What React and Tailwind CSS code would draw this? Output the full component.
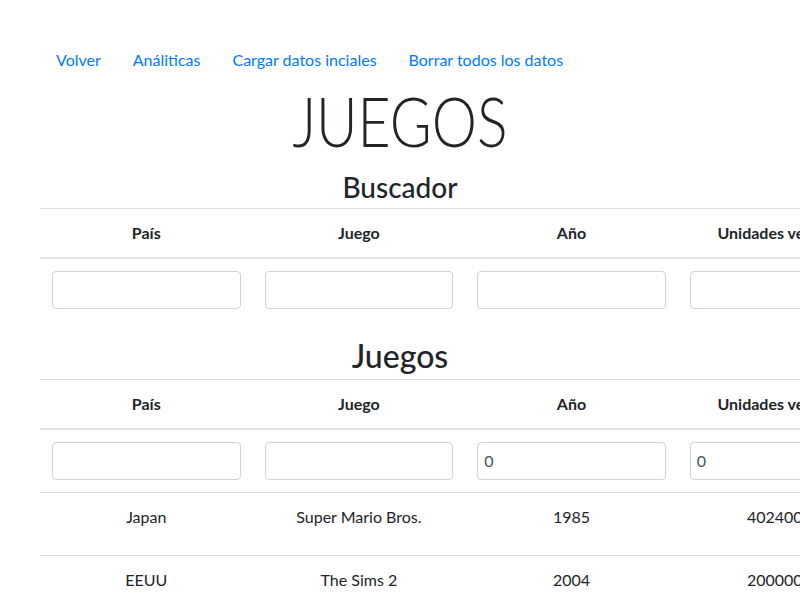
import React from 'react';

const columns = ['País', 'Juego', 'Año', 'Unidades vendidas', 'Acciones'];

const games = [
  { country: 'Japan', name: 'Super Mario Bros.', year: 1985, units: 40240000 },
  { country: 'EEUU', name: 'The Sims 2', year: 2004, units: 20000000 },
];

function HeaderRow() {
  return (
    <thead>
      <tr>
        {columns.map((c) => (
          <th
            key={c}
            className="border-t border-b-2 border-[#dee2e6] p-3 text-center font-bold align-bottom whitespace-nowrap"
          >
            {c}
          </th>
        ))}
      </tr>
    </thead>
  );
}

function Field({ value }) {
  return (
    <input
      defaultValue={value}
      className="block w-full h-[38px] px-[6px] rounded border border-[#ced4da] text-[#495057] outline-none bg-white"
    />
  );
}

function Btn({ children, color }) {
  return (
    <button className={`h-[38px] px-3 rounded text-white ${color}`}>{children}</button>
  );
}

export default function App() {
  return (
    <div className="w-full overflow-hidden bg-white text-[#212529] text-base leading-6 font-['Lato','Noto_Sans',sans-serif]">
      <div className="w-[720px] mx-auto pt-10">
        {/* Navigation */}
        <nav className="flex">
          {['Volver', 'Análiticas', 'Cargar datos inciales', 'Borrar todos los datos'].map((l) => (
            <a key={l} href="#" className="px-4 py-2 text-[#007bff]">
              {l}
            </a>
          ))}
        </nav>

        <h1 className="text-center text-[68px] font-light leading-[1.2] scale-x-[0.84]">JUEGOS</h1>

        {/* Buscador */}
        <h3 className="text-center text-[28px] font-medium leading-[1.2] mt-[9px] mb-[4px]">Buscador</h3>
        <table className="table-fixed w-[1063px] border-collapse">
          <HeaderRow />
          <tbody>
            <tr>
              <td className="p-3"><Field /></td>
              <td className="p-3"><Field /></td>
              <td className="p-3"><Field /></td>
              <td className="p-3"><Field /></td>
              <td className="p-3"><Btn color="bg-[#007bff]">Buscar</Btn></td>
            </tr>
          </tbody>
        </table>

        {/* Juegos */}
        <h2 className="text-center text-[32px] font-medium leading-[1.2] mt-4 mb-[3px]">Juegos</h2>
        <table className="table-fixed w-[1063px] border-collapse">
          <HeaderRow />
          <tbody>
            <tr>
              <td className="p-3"><Field /></td>
              <td className="p-3"><Field /></td>
              <td className="p-3"><Field value="0" /></td>
              <td className="p-3"><Field value="0" /></td>
              <td className="p-3"><Btn color="bg-[#28a745]">Añadir</Btn></td>
            </tr>
            {games.map((g) => (
              <tr key={g.name}>
                <td className="border-t border-[#dee2e6] p-3 text-center align-top">{g.country}</td>
                <td className="border-t border-[#dee2e6] p-3 text-center align-top">{g.name}</td>
                <td className="border-t border-[#dee2e6] p-3 text-center align-top">{g.year}</td>
                <td className="border-t border-[#dee2e6] p-3 text-center align-top">{g.units}</td>
                <td className="border-t border-[#dee2e6] p-3 text-center align-top">
                  <div className="flex gap-2 justify-center">
                    <Btn color="bg-[#007bff]">Editar</Btn>
                    <Btn color="bg-[#dc3545]">Borrar</Btn>
                  </div>
                </td>
              </tr>
            ))}
          </tbody>
        </table>
      </div>
    </div>
  );
}
